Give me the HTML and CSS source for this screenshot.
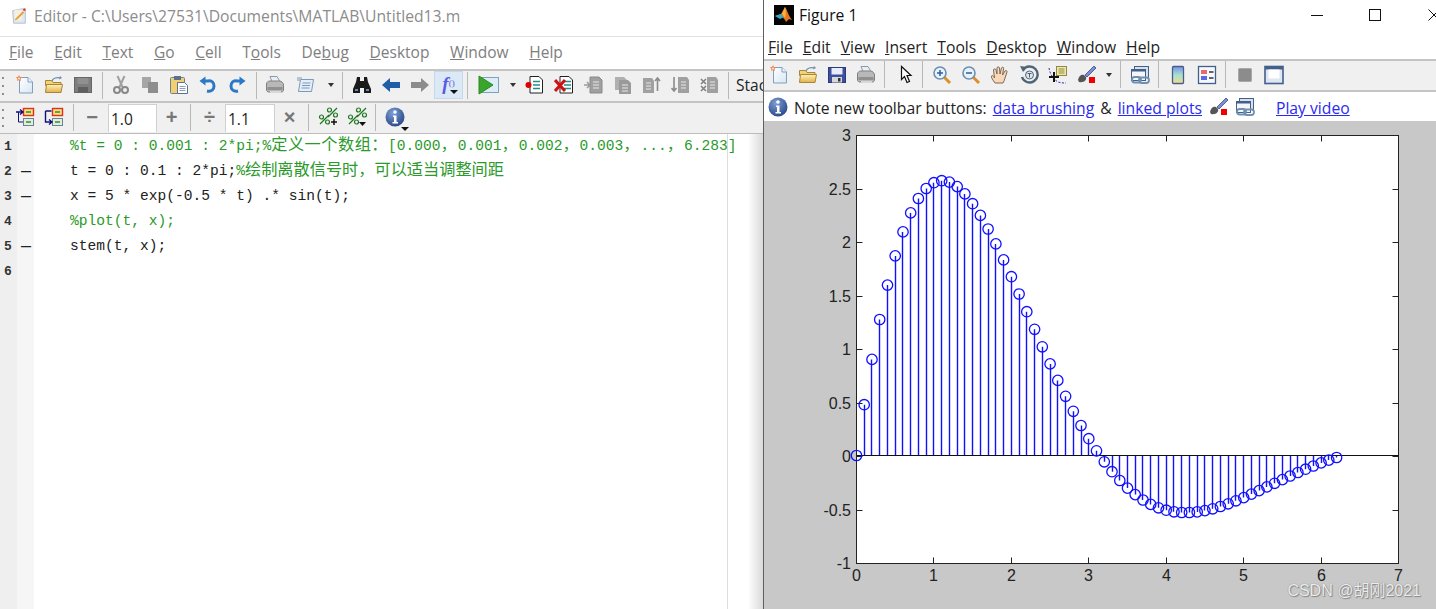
FILE: index.html
```html
<!DOCTYPE html>
<html lang="en">
<head>
<meta charset="utf-8">
<title>MATLAB Editor and Figure 1</title>
<link rel="stylesheet" href="styles.css">
</head>
<body>
<svg class="defs" aria-hidden="true">
  <defs>
    <linearGradient id="docg" x1="0" y1="0" x2="1" y2="1"><stop offset="0" stop-color="#fff"/><stop offset="1" stop-color="#d6e6f4"/></linearGradient>
    <linearGradient id="foldg" x1="0" y1="0" x2="0" y2="1"><stop offset="0" stop-color="#fff3b8"/><stop offset="1" stop-color="#e2b04a"/></linearGradient>
    <linearGradient id="cbg" x1="0" y1="0" x2="0" y2="1"><stop offset="0" stop-color="#7d8fe8"/><stop offset=".5" stop-color="#a6e0d0"/><stop offset="1" stop-color="#f6dc8c"/></linearGradient>
    <radialGradient id="infog" cx=".4" cy=".3" r=".8"><stop offset="0" stop-color="#7f9fd6"/><stop offset="1" stop-color="#1f3f80"/></radialGradient>
    <symbol id="i-new" viewBox="0 0 20 20"><path d="M4.500 2.500H13l4.500 4.500v11h-13z" fill="url(#docg)" stroke="#7f9fbe"/><path d="M13 2.500V7h4.500" fill="#eef5fb" stroke="#7f9fbe"/><path d="M1 2h2l1-2 1 2h2L5.500 4l.5 2-2-1-2 1 .5-2z" fill="#f08050"/><circle cx="4" cy="3.500" r="1" fill="#fff2c0"/></symbol>
    <symbol id="i-open" viewBox="0 0 20 20"><path d="M8 6c1-3 5-4 8-3" fill="none" stroke="#6c8ca8" stroke-width="1.300"/><path d="M16 1l2 2-3 1.500z" fill="#6c8ca8"/><path d="M1.500 5.500h6l1.500 2h8v3h-15.500z" fill="#f2d27a" stroke="#a98538"/><path d="M1.500 17.500l1-8h16l-1.500 8z" fill="url(#foldg)" stroke="#a98538"/></symbol>
    <symbol id="i-save-off" viewBox="0 0 20 20"><rect x="1.500" y="2.500" width="17" height="15" fill="#7d7d7d" stroke="#666"/><rect x="4.500" y="3" width="11" height="6" fill="#8f8f8f"/><rect x="5" y="12" width="10" height="5.500" fill="#5f5f5f"/></symbol>
    <symbol id="i-save" viewBox="0 0 20 20"><rect x="1.500" y="2.500" width="17" height="15" fill="#3f4f9f" stroke="#2e3a78"/><rect x="4.500" y="3" width="11" height="6.500" fill="#e8ecfa"/><rect x="5" y="12" width="10" height="5.500" fill="#d8d8d8"/><rect x="11" y="13" width="2.500" height="3.500" fill="#333"/></symbol>
    <symbol id="i-cut" viewBox="0 0 20 20"><path d="M6.500 1l5 11M13.500 1l-5 11" stroke="#a0a0a0" stroke-width="2" fill="none"/><circle cx="6" cy="15" r="3" fill="none" stroke="#888" stroke-width="2"/><circle cx="14" cy="15" r="3" fill="none" stroke="#888" stroke-width="2"/></symbol>
    <symbol id="i-copy" viewBox="0 0 20 20"><rect x="2" y="2" width="9" height="11" fill="#a6a6a6"/><rect x="8" y="7" width="10" height="11" fill="#8e8e8e"/></symbol>
    <symbol id="i-paste" viewBox="0 0 20 20"><rect x="1.500" y="2.500" width="14" height="16" rx="1" fill="#f0d070" stroke="#6f7f98"/><rect x="5" y="1" width="7" height="4" fill="#5a6f92"/><path d="M8.500 7.500h7l3 3v8h-10z" fill="#fff" stroke="#5a6f92"/><path d="M10.500 11.500h6M10.500 13.500h6M10.500 15.500h6" stroke="#8aa0b8"/></symbol>
    <symbol id="i-undo" viewBox="0 0 20 20"><path d="M9 16c5 1 7-2 7-5s-2-6-6-5H6" fill="none" stroke="#2a78c8" stroke-width="3"/><path d="M1.500 6l6-4.500v9z" fill="#2a78c8"/></symbol>
    <symbol id="i-redo" viewBox="0 0 20 20"><path d="M11 16c-5 1-7-2-7-5s2-6 6-5h4" fill="none" stroke="#2a78c8" stroke-width="3"/><path d="M18.500 6l-6-4.500v9z" fill="#2a78c8"/></symbol>
    <symbol id="i-print" viewBox="0 0 20 20"><path d="M5 1.500h7l3 5H7z" fill="#e8eef4" stroke="#8a9aa8"/><path d="M1.500 9c0-2 2-3 3-3h10c2 0 4 2 4 4v5c0 1-1 2-2 2H4c-1.500 0-2.500-1-2.500-2z" fill="#b8b8b8" stroke="#808080"/><path d="M2.500 12h15v3h-15z" fill="#909090"/><path d="M5 16h11v2H5z" fill="#d8d8d8"/></symbol>
    <symbol id="i-publish" viewBox="0 0 20 20"><path d="M4.500 4.500h13l-2 12h-13z" fill="#e4eef8" stroke="#7a9ab8"/><path d="M6.500 8h8M6 10.500h8M5.500 13h8" stroke="#7a9ab8"/><path d="M1 3h5M1 5h3" stroke="#7a9ab8"/></symbol>
    <symbol id="i-bino" viewBox="0 0 20 20"><path d="M5 2h3v4h4V2h3l1 5 3 7v4h-7v-5H8v5H1v-4l3-7z" fill="#1a1a1a"/><path d="M3 14h3v2H3zM14 14h3v2h-3z" fill="#6a88a8"/></symbol>
    <symbol id="i-back" viewBox="0 0 20 20"><path d="M1 10l8-7v4h10v6H9v4z" fill="#1f5fa8"/></symbol>
    <symbol id="i-fwd" viewBox="0 0 20 20"><path d="M19 10l-8-7v4H1v6h10v4z" fill="#8c8c8c"/></symbol>
    <symbol id="i-run" viewBox="0 0 24 20"><rect x="4.500" y="2.500" width="17" height="15" fill="#dcecf8" stroke="#7fa0c0"/><path d="M2 1l14 9-14 9z" fill="#3aa52c" stroke="#2a8a20"/></symbol>
    <symbol id="i-brk" viewBox="0 0 20 20"><path d="M5 1.500h9l3.500 3.500v13H5z" fill="#fff" stroke="#222"/><path d="M8 6.500h7M8 10h7M8 13.500h7" stroke="#2a8a8a" stroke-width="1.400"/><circle cx="3.500" cy="10" r="3" fill="#e00000"/></symbol>
    <symbol id="i-clr" viewBox="0 0 20 20"><path d="M6 1.500h9l3.500 3.500v13H6z" fill="#fff" stroke="#222"/><path d="M10 6.500h7M10 10h7M10 13.500h7" stroke="#2a8a8a" stroke-width="1.400"/><path d="M1 5l10 11M11 5L1 16" stroke="#d01010" stroke-width="3"/></symbol>
    <symbol id="i-d1" viewBox="0 0 20 20"><path d="M7 2h9l3 3v13H7z" fill="#a0a0a0" stroke="#8a8a8a"/><path d="M10 7h6M10 10h6M10 13h6" stroke="#e8e8e8"/><path d="M1 10h5M4 7l3 3-3 3" fill="none" stroke="#9a9a9a" stroke-width="1.500"/></symbol>
    <symbol id="i-d2" viewBox="0 0 20 20"><path d="M3 2h9l3 3v10H3z" fill="#b0b0b0"/><path d="M7 5h9l3 3v11H7z" fill="#9a9a9a"/><path d="M10 10h6M10 13h6M10 16h6" stroke="#e8e8e8"/></symbol>
    <symbol id="i-d3" viewBox="0 0 20 20"><path d="M2 3h9l2 3v12H2z" fill="#a0a0a0"/><path d="M5 8h5M5 11h5M5 14h5" stroke="#e8e8e8"/><path d="M16.500 16V3M14 6l2.500-3L19 6" fill="none" stroke="#8a8a8a" stroke-width="1.600"/></symbol>
    <symbol id="i-d4" viewBox="0 0 20 20"><path d="M8 2h9l2 3v13H8z" fill="#a0a0a0"/><path d="M11 7h5M11 10h5M11 13h5" stroke="#e8e8e8"/><path d="M4 2v14M1.500 13L4 16l2.500-3" fill="none" stroke="#8a8a8a" stroke-width="1.600"/></symbol>
    <symbol id="i-d5" viewBox="0 0 20 20"><path d="M8 2h9l2 3v13H8z" fill="#a0a0a0"/><path d="M11 7h5M11 10h5M11 13h5" stroke="#e8e8e8"/><path d="M2 4l5 5M7 4L2 9M2 11l5 5M7 11l-5 5" stroke="#808080" stroke-width="1.600"/></symbol>
    <symbol id="i-cell-a" viewBox="0 0 20 20"><rect x="8.500" y="1.500" width="10" height="7" fill="#f2e27a" stroke="#e03020" stroke-width="1.400"/><path d="M11 5h5" stroke="#3a8a3a" stroke-width="1.500"/><rect x="8.500" y="11.500" width="10" height="7" fill="#dff0d8" stroke="#6f7f98"/><path d="M11 15h5" stroke="#3a8a3a" stroke-width="1.500"/><path d="M1 5h6M5 2.500L8 5 5 7.500" fill="none" stroke="#101080" stroke-width="1.400"/><path d="M3.500 5v10H8" fill="none" stroke="#101080" stroke-width="1"/></symbol>
    <symbol id="i-cell-b" viewBox="0 0 20 20"><rect x="8.500" y="1.500" width="10" height="7" fill="#f2e27a" stroke="#e03020" stroke-width="1.400"/><path d="M11 5h5" stroke="#3a8a3a" stroke-width="1.500"/><rect x="8.500" y="11.500" width="10" height="7" fill="#dff0d8" stroke="#6f7f98"/><path d="M11 15h5" stroke="#3a8a3a" stroke-width="1.500"/><path d="M1.500 4h6M1.500 4v11h6M5 12.500L8 15 5 17.500" fill="none" stroke="#101080" stroke-width="1.400"/></symbol>
    <symbol id="i-pp" viewBox="0 0 20 20"><g fill="none" stroke="#1f7a1f" stroke-width="1.200"><circle cx="3.500" cy="10" r="2"/><circle cx="9.500" cy="15" r="2"/><path d="M2 17L11 8"/><circle cx="11.500" cy="3" r="2"/><circle cx="17.500" cy="8" r="2"/><path d="M10 10L19 1"/></g><path d="M13 15h6M16 12v6" stroke="#111" stroke-width="1.500"/></symbol>
    <symbol id="i-pm" viewBox="0 0 20 20"><g fill="none" stroke="#1f7a1f" stroke-width="1.200"><circle cx="3.500" cy="10" r="2"/><circle cx="9.500" cy="15" r="2"/><path d="M2 17L11 8"/><circle cx="11.500" cy="3" r="2"/><circle cx="17.500" cy="8" r="2"/><path d="M10 10L19 1"/></g><path d="M12 15h7l-3.500 4z" fill="#111"/></symbol>
    <symbol id="i-info" viewBox="0 0 20 20"><circle cx="10" cy="10" r="9.500" fill="url(#infog)"/><circle cx="10" cy="5" r="1.800" fill="#fff"/><path d="M8 8.500h3.500V15H13v1.500H7.500V15H9V10H8z" fill="#fff"/></symbol>
    <symbol id="i-ptr" viewBox="0 0 20 20"><path d="M6.500 1.500v13l3-3 2.500 6 2.500-1-2.500-6h4z" fill="#fff" stroke="#111" stroke-width="1.200"/></symbol>
    <symbol id="i-zin" viewBox="0 0 20 20"><path d="M12 12l6 6" stroke="#e09020" stroke-width="3"/><circle cx="8" cy="8" r="6" fill="#e8f2fa" stroke="#6f8fb0" stroke-width="1.600"/><path d="M5 8h6M8 5v6" stroke="#2a5f9f" stroke-width="1.500"/></symbol>
    <symbol id="i-zout" viewBox="0 0 20 20"><path d="M12 12l6 6" stroke="#e09020" stroke-width="3"/><circle cx="8" cy="8" r="6" fill="#e8f2fa" stroke="#6f8fb0" stroke-width="1.600"/><path d="M5 8h6" stroke="#2a5f9f" stroke-width="1.500"/></symbol>
    <symbol id="i-hand" viewBox="0 0 20 20"><path d="M5 18c-2-3-4-5-3.500-7 1-1 2.500 0 3 2L3.500 5c0-1.500 2-1.500 2.500 0L7 9 7 3c0-1.500 2.300-1.500 2.500 0L10 9l1.500-6c.5-1.300 2.300-1 2.200.5L12.500 10l2.500-4c1-1 2.500-.2 2 1L15 13c-.5 2-1 3.500-2 5z" fill="#f8d8b8" stroke="#7a6a5a"/></symbol>
    <symbol id="i-rot" viewBox="0 0 20 20"><path d="M4 5a8 8 0 1 1-1 7" fill="none" stroke="#506478" stroke-width="2.400"/><path d="M1 1l7 1-4 5z" fill="#506478"/><circle cx="10.500" cy="10" r="4" fill="#dde6ee" stroke="#506478"/><path d="M8.500 8.500h4M10.500 8.500v4" stroke="#506478"/></symbol>
    <symbol id="i-cur" viewBox="0 0 20 20"><rect x="8.500" y="1.500" width="10" height="9" fill="#f4e8a0" stroke="#8a8a50"/><path d="M10.500 4h6M10.500 6h6M10.500 8h6" stroke="#8a8a50"/><path d="M1 3c1 6 4 11 9 14 3 1 6 1 8 1" fill="none" stroke="#3030c0" stroke-dasharray="2 1.500"/><path d="M1 12h10M6 7v10" stroke="#111" stroke-width="2"/></symbol>
    <symbol id="i-brush" viewBox="0 0 20 20"><path d="M17 1l2 2-9 9-2-2z" fill="#7a90d0" stroke="#3a4a80" stroke-width=".8"/><path d="M1 15c1-4 3-6 6-5l2 2c1 3-2 6-7 5l-1-2z" fill="#555"/><rect x="12" y="12" width="6" height="6" fill="#f00000"/></symbol>
    <symbol id="i-link" viewBox="0 0 20 20"><rect x="4.500" y="1.500" width="14" height="11" fill="#d8e0ea" stroke="#43608c"/><rect x="1.500" y="4.500" width="14" height="11" fill="#f4f6fa" stroke="#43608c"/><path d="M1.500 4.500h14v2h-14z" fill="#43608c"/><rect x="2" y="12" width="9" height="5.500" rx="2.700" fill="none" stroke="#7090b0" stroke-width="1.800"/><rect x="9" y="12.500" width="10" height="5.500" rx="2.700" fill="none" stroke="#7090b0" stroke-width="1.800"/></symbol>
    <symbol id="i-cb" viewBox="0 0 20 20"><rect x="4.500" y="1.500" width="11" height="17" rx="1" fill="url(#cbg)" stroke="#43608c" stroke-width="1.300"/></symbol>
    <symbol id="i-leg" viewBox="0 0 20 20"><rect x="1.500" y="1.500" width="17" height="17" fill="#f6f8fb" stroke="#43608c" stroke-width="1.300"/><rect x="4" y="5" width="6" height="4" fill="#e86a6a"/><rect x="4" y="11" width="6" height="4" fill="#5a6ae0"/><path d="M12 7h4.500M12 13h4.500" stroke="#333" stroke-width="1.300"/></symbol>
    <symbol id="i-hide" viewBox="0 0 20 20"><rect x="3.500" y="3.500" width="13" height="13" rx="1" fill="#8c8c8c" stroke="#a8a8a8"/></symbol>
    <symbol id="i-tools" viewBox="0 0 20 20"><rect x="1" y="1.500" width="18" height="17" fill="#dfe6f0" stroke="#43608c" stroke-width="1.600"/><rect x="1" y="1.500" width="18" height="3" fill="#43608c"/><rect x="4.500" y="4.500" width="11" height="9" fill="#fff"/></symbol>
    <symbol id="i-title" viewBox="0 0 20 20"><path d="M3 4l11-2 3 2v14H4z" fill="#dfe8f2" stroke="#b0bcc8"/><path d="M5 3h8v12H5z" fill="#f4f0e2"/><path d="M6 13l8-8 2 1-8 8-3 1z" fill="#e8a030"/><circle cx="16" cy="3" r="1.500" fill="#d84040"/></symbol>
    <symbol id="i-matlab" viewBox="0 0 20 20"><rect width="20" height="20" fill="#050505"/><path d="M1 11l6-2 4-7c2 2 3 8 7 13l-3-1-3 3c-1-2-2-4-4-5z" fill="#e8761e"/><path d="M1 11l6-2 3 3-4 2z" fill="#3aa8c8"/><path d="M11 2l-3 7 3 4c1-3 1-8 0-11z" fill="#f6b43c"/></symbol>
  </defs>
</svg>

<div class="desk">
  <section class="editor">
    <header class="titlebar">
      <svg class="ticon"><use href="#i-title"/></svg>
      <span class="ttext ttext-off">Editor - C:\Users\27531\Documents\MATLAB\Untitled13.m</span>
    </header>
    <nav class="menu menu-off">
      <span><u>F</u>ile</span><span><u>E</u>dit</span><span><u>T</u>ext</span><span><u>G</u>o</span><span><u>C</u>ell</span><span>T<u>o</u>ols</span><span>De<u>b</u>ug</span><span><u>D</u>esktop</span><span><u>W</u>indow</span><span><u>H</u>elp</span>
    </nav>
    <div class="bar">
      <i class="grip"></i>
      <b class="tb"><svg><use href="#i-new"/></svg></b>
      <b class="tb"><svg><use href="#i-open"/></svg></b>
      <b class="tb"><svg><use href="#i-save-off"/></svg></b>
      <i class="sep"></i>
      <b class="tb"><svg><use href="#i-cut"/></svg></b>
      <b class="tb"><svg><use href="#i-copy"/></svg></b>
      <b class="tb"><svg><use href="#i-paste"/></svg></b>
      <b class="tb"><svg><use href="#i-undo"/></svg></b>
      <b class="tb"><svg><use href="#i-redo"/></svg></b>
      <i class="sep"></i>
      <b class="tb"><svg><use href="#i-print"/></svg></b>
      <b class="tb tb-wide"><svg><use href="#i-publish"/></svg></b>
      <b class="drop"></b>
      <i class="sep"></i>
      <b class="tb"><svg><use href="#i-bino"/></svg></b>
      <b class="tb"><svg><use href="#i-back"/></svg></b>
      <b class="tb"><svg><use href="#i-fwd"/></svg></b>
      <b class="tb tb-on"><em class="fx">f<small>()</small></em><span class="fx-arrow"></span></b>
      <i class="sep"></i>
      <b class="tb tb-wide"><svg class="wide-icon"><use href="#i-run"/></svg></b>
      <b class="drop"></b>
      <b class="tb"><svg><use href="#i-brk"/></svg></b>
      <b class="tb"><svg><use href="#i-clr"/></svg></b>
      <b class="tb"><svg><use href="#i-d1"/></svg></b>
      <b class="tb"><svg><use href="#i-d2"/></svg></b>
      <b class="tb"><svg><use href="#i-d3"/></svg></b>
      <b class="tb"><svg><use href="#i-d4"/></svg></b>
      <b class="tb"><svg><use href="#i-d5"/></svg></b>
      <i class="sep"></i>
      <span class="stack">Stack</span>
    </div>
    <div class="bar">
      <i class="grip"></i>
      <b class="tb"><svg><use href="#i-cell-a"/></svg></b>
      <b class="tb"><svg><use href="#i-cell-b"/></svg></b>
      <i class="sep"></i>
      <b class="tb op">−</b>
      <span class="num num-a">1.0</span>
      <b class="tb op">+</b>
      <i class="sep"></i>
      <b class="tb op">÷</b>
      <span class="num num-b">1.1</span>
      <b class="tb op">×</b>
      <i class="sep"></i>
      <b class="tb"><svg><use href="#i-pp"/></svg></b>
      <b class="tb"><svg><use href="#i-pm"/></svg></b>
      <i class="sep"></i>
      <b class="tb"><svg><use href="#i-info"/></svg><span class="info-arrow"></span></b>
    </div>
    <div class="code">
      <div class="nums"><span>1</span><span>2</span><span>3</span><span>4</span><span>5</span><span>6</span></div>
      <div class="dashes"><span></span><span>—</span><span>—</span><span></span><span>—</span><span></span></div>
      <pre class="lines"><span class="c">%t = 0 : 0.001 : 2*pi;%<span class="z z-a">定义一个数组：</span>[0.000<span class="z z-b">，</span>0.001<span class="z z-b">，</span>0.002<span class="z z-b">，</span>0.003<span class="z z-b">，</span>...<span class="z z-b">，</span>6.283]</span>
t = 0 : 0.1 : 2*pi;<span class="c">%<span class="z">绘制离散信号时，可以适当调整间距</span></span>
x = 5 * exp(-0.5 * t) .* sin(t);
<span class="c">%plot(t, x);</span>
stem(t, x);
</pre>
      <i class="margin"></i>
      <i class="shadow"></i>
    </div>
  </section>

  <section class="figure">
    <header class="titlebar titlebar-fig">
      <svg class="ticon-fig"><use href="#i-matlab"/></svg>
      <span class="ttext">Figure 1</span>
      <span class="winbtns">
        <i class="w-min"></i>
        <i class="w-max"></i>
        <svg class="w-close" viewBox="0 0 12 12"><path d="M.5.500l11 11M11.500.500l-11 11" stroke="#111" fill="none"/></svg>
      </span>
    </header>
    <nav class="menu menu-fig">
      <span><u>F</u>ile</span><span><u>E</u>dit</span><span><u>V</u>iew</span><span><u>I</u>nsert</span><span><u>T</u>ools</span><span><u>D</u>esktop</span><span><u>W</u>indow</span><span><u>H</u>elp</span>
    </nav>
    <div class="bar bar-fig">
      <b class="tb"><svg><use href="#i-new"/></svg></b>
      <b class="tb"><svg><use href="#i-open"/></svg></b>
      <b class="tb"><svg><use href="#i-save"/></svg></b>
      <b class="tb"><svg><use href="#i-print"/></svg></b>
      <i class="sep"></i>
      <b class="tb tb-ptr"><svg><use href="#i-ptr"/></svg></b>
      <i class="sep"></i>
      <b class="tb"><svg><use href="#i-zin"/></svg></b>
      <b class="tb"><svg><use href="#i-zout"/></svg></b>
      <b class="tb"><svg><use href="#i-hand"/></svg></b>
      <b class="tb"><svg><use href="#i-rot"/></svg></b>
      <b class="tb"><svg><use href="#i-cur"/></svg></b>
      <b class="tb"><svg><use href="#i-brush"/></svg></b>
      <b class="drop drop-fig"></b>
      <i class="sep"></i>
      <b class="tb"><svg><use href="#i-link"/></svg></b>
      <i class="sep"></i>
      <b class="tb"><svg><use href="#i-cb"/></svg></b>
      <b class="tb"><svg><use href="#i-leg"/></svg></b>
      <i class="sep"></i>
      <b class="tb"><svg><use href="#i-hide"/></svg></b>
      <b class="tb"><svg><use href="#i-tools"/></svg></b>
    </div>
    <div class="note">
      <svg class="note-info"><use href="#i-info"/></svg>
      <span class="note-text">Note new toolbar buttons:</span>
      <a class="lnk lnk-a">data brushing</a>
      <span class="amp">&amp;</span>
      <a class="lnk lnk-b">linked plots</a>
      <svg class="note-ic note-ic-a"><use href="#i-brush"/></svg>
      <svg class="note-ic note-ic-b"><use href="#i-link"/></svg>
      <a class="lnk lnk-c">Play video</a>
    </div>
    <div class="plotwrap">
      <svg id="plot" class="plot" width="672" height="488" viewBox="0 0 672 488"></svg>
      <span class="mark">CSDN @胡刚2021</span>
    </div>
  </section>
</div>
<script src="plot.js"></script>
</body>
</html>
```

FILE: styles.css
```css
* { box-sizing: border-box; }
html, body { margin: 0; height: 100%; overflow: hidden; background: #fff; }
body { font-family: "Open Sans", "Noto Sans", sans-serif; }
.defs { position: absolute; width: 0; height: 0; }
.desk { display: flex; width: 1436px; height: 609px; overflow: hidden; }

.editor { width: 764px; flex: none; display: flex; flex-direction: column; border-right: 1px solid #5f5f5f; overflow: hidden; }
.figure { flex: 1; display: flex; flex-direction: column; min-width: 0; }

.titlebar { height: 37px; flex: none; display: flex; align-items: center; padding: 0 0 4px 10px; background: #fff; border-bottom: 1px solid #e2e2e2; }
.titlebar-fig { height: 32px; padding: 0 0 2px 10px; border-bottom: 0; }
.ticon { width: 18px; height: 20px; margin-right: 6px; }
.ticon-fig { width: 20px; height: 20px; margin-right: 5px; }
.ttext { font-size: 15.700px; color: #111; white-space: nowrap; }
.ttext-off { color: #8c8c8c; }
.winbtns { margin-left: auto; display: flex; align-items: center; }
.w-min { width: 12px; height: 1px; background: #111; margin-right: 46px; }
.w-max { width: 12px; height: 12px; border: 1px solid #111; margin-right: 47px; }
.w-close { width: 12px; height: 12px; flex: none; margin-right: -4px; }

.menu { height: 32px; flex: none; display: flex; align-items: center; padding: 0 0 2px 9px; gap: 20.700px; font-size: 15.500px; background: #fff; white-space: nowrap; }
.menu-off { color: #7e7e7e; }
.menu-fig { height: 27px; padding: 3px 0 0 4px; gap: 10px; font-size: 15.700px; color: #222; }

.bar { height: 32px; flex: none; display: flex; align-items: center; background: #f0f0f0; border-top: 2px solid #c4c4c4; padding-bottom: 2px; white-space: nowrap; overflow: hidden; }
.bar-fig { height: 33px; padding-bottom: 2px; border-bottom: 2px solid #c4c4c4; }
.grip { width: 10.500px; height: 22px; flex: none; background: radial-gradient(circle, #8f8f8f 1px, transparent 1.400px) 1px 0 / 4px 8px repeat-y; }
.tb { width: 29px; height: 28px; flex: none; display: flex; align-items: center; justify-content: center; position: relative; font-weight: 700; }
.tb svg { width: 20px; height: 20px; }
.tb .wide-icon { width: 24px; }
.tb-wide { width: 33px; }
.tb-ptr { padding-left: 3px; }
.tb-on { background: #dbe8f6; border: 1px solid #c6d8ea; }
.drop { width: 15.500px; height: 28px; flex: none; position: relative; }
.drop::after { content: ""; position: absolute; left: 5px; top: 12px; border: 3.500px solid transparent; border-top: 4px solid #333; border-bottom: 0; }
.drop-fig { width: 15px; }
.sep { width: 1px; height: 27px; flex: none; margin: 0 4px; background: #b8b8b8; }
.stack { font-size: 15.500px; color: #222; padding-left: 3.500px; }
.fx { font: italic 700 19px "Liberation Serif", serif; color: #5a5ae0; line-height: 1; margin-top: -3px; }
.fx small { font-size: 9px; font-style: normal; font-weight: 400; vertical-align: 4px; }
.fx-arrow { position: absolute; right: 4px; bottom: 4px; border: 4px solid transparent; border-top: 4px solid #111; border-bottom: 0; }
.info-arrow { position: absolute; right: 0; bottom: 0; border: 4px solid transparent; border-top: 4px solid #111; border-bottom: 0; }
.op { font-size: 20px; color: #777; font-family: "Liberation Sans", sans-serif; }
.num { height: 28px; width: 49px; flex: none; align-self: flex-end; margin-bottom: -1px; background: #fff; border: 1px solid #d0d0d0; border-bottom: 0; font-size: 15.500px; color: #222; display: flex; align-items: center; padding-left: 2px; }
.num-a { margin-left: 1.500px; }
.num-b { margin-left: 1px; width: 50px; }

.code { flex: 1; min-height: 0; display: flex; position: relative; background: #fff; border-top: 1px solid #bcbcbc; overflow: hidden; }
.nums { width: 17px; flex: none; background: #efefef; display: flex; flex-direction: column; }
.nums span { height: 25.100px; padding-left: 4px; font: 700 13px/25px "Liberation Mono", monospace; color: #333; }
.dashes { width: 17px; flex: none; background: #f6f6f6; display: flex; flex-direction: column; }
.dashes span { height: 25.100px; font: 700 10px/25px "Liberation Sans", sans-serif; color: #222; padding-left: 4px; }
.lines { margin: 0 0 0 36px; font: 14.580px/25.100px "Liberation Mono", "Noto Sans CJK SC", monospace; color: #222; white-space: pre; position: relative; z-index: 1; }
.c { color: #2a9a2a; }
.z { font-size: 16.200px; line-height: 1; }
.z-a { letter-spacing: .5px; }
.z-b { letter-spacing: 1px; }
.margin { position: absolute; left: 727px; top: 0; bottom: 0; width: 1px; background: #ddd; }
.shadow { position: absolute; right: 0; top: 0; bottom: 0; width: 15px; background: linear-gradient(90deg, rgba(160,160,160,0), rgba(160,160,160,.4)); z-index: 2; }

.note { height: 29px; flex: none; display: flex; align-items: center; background: #fff; font-size: 15.700px; color: #222; white-space: nowrap; padding: 2px 0 0 4px; }
.note-info { width: 20px; height: 20px; margin: -2px 6px 0 0; flex: none; }
.note-text { margin-right: 6px; }
.lnk { color: #2a2af0; text-decoration: underline; }
.amp { margin: 0 6px; }
.note-ic { width: 20px; height: 20px; flex: none; margin-top: -2px; }
.note-ic-a { margin-left: 7px; }
.note-ic-b { margin-left: 6px; margin-right: 21px; }

.plotwrap { flex: 1; min-height: 0; position: relative; background: #c8c8c8; }
.plot { display: block; }
.plot text { font: 16px "Liberation Sans", sans-serif; fill: #222; }
.mark { position: absolute; right: 15px; bottom: 12px; font: 16px/12px "Liberation Sans", "Noto Sans CJK SC", sans-serif; color: #ececec; text-shadow: 0 0 1px #777, 1px 1px 1px #888; white-space: nowrap; }
```

FILE: plot.js
```js
(function () {
  var NS = "http://www.w3.org/2000/svg";
  var svg = document.getElementById("plot");
  var X0 = 92.5, XU = 77.43, Y0 = 334.5, YU = 106.9;
  var TOP = 14.5, BOT = 442.5, RIGHT = 634.5;
  function el(name, attrs, text) {
    var n = document.createElementNS(NS, name);
    for (var k in attrs) n.setAttribute(k, attrs[k]);
    if (text !== undefined) n.textContent = text;
    svg.appendChild(n);
    return n;
  }
  el("rect", { x: X0, y: TOP, width: RIGHT - X0, height: BOT - TOP, fill: "#fff", stroke: "#222", "stroke-width": 1 });
  var i, p, label;
  for (i = 0; i <= 7; i++) {
    p = Math.round(X0 + i * XU - 0.5) + 0.5;
    if (i > 0 && i < 7) {
      el("path", { d: "M" + p + " " + BOT + "v-6M" + p + " " + TOP + "v6", stroke: "#222", fill: "none" });
    }
    el("text", { x: p, y: 460, "text-anchor": "middle" }, String(i));
  }
  for (i = 0; i <= 8; i++) {
    var v = 3 - i * 0.5;
    p = Math.round(TOP + i * 53.5 - 0.5) + 0.5;
    if (i > 0 && i < 8) {
      el("path", { d: "M" + X0 + " " + p + "h6M" + RIGHT + " " + p + "h-6", stroke: "#222", fill: "none" });
    }
    label = v < 0 ? "-" + Math.abs(v) : String(v);
    el("text", { x: 87, y: p + 5.5, "text-anchor": "end" }, label);
  }
  var d = "", pts = [];
  for (i = 0; i <= 62; i++) {
    var t = i * 0.1;
    var y = 5 * Math.exp(-0.5 * t) * Math.sin(t);
    var px = X0 + t * XU, py = Y0 - y * YU;
    d += "M" + (Math.round(px - 0.5) + 0.5) + " " + Y0 + "V" + py.toFixed(1);
    pts.push([px, py]);
  }
  el("path", { d: d, stroke: "#1010ff", fill: "none", "stroke-width": 1.4 });
  el("path", { d: "M" + X0 + " " + Y0 + "H" + RIGHT, stroke: "#111", fill: "none", "stroke-width": 1.2 });
  pts.forEach(function (q) {
    el("circle", { cx: q[0].toFixed(1), cy: q[1].toFixed(1), r: 5.2, fill: "none", stroke: "#1010ff", "stroke-width": 1.3 });
  });
})();
```
